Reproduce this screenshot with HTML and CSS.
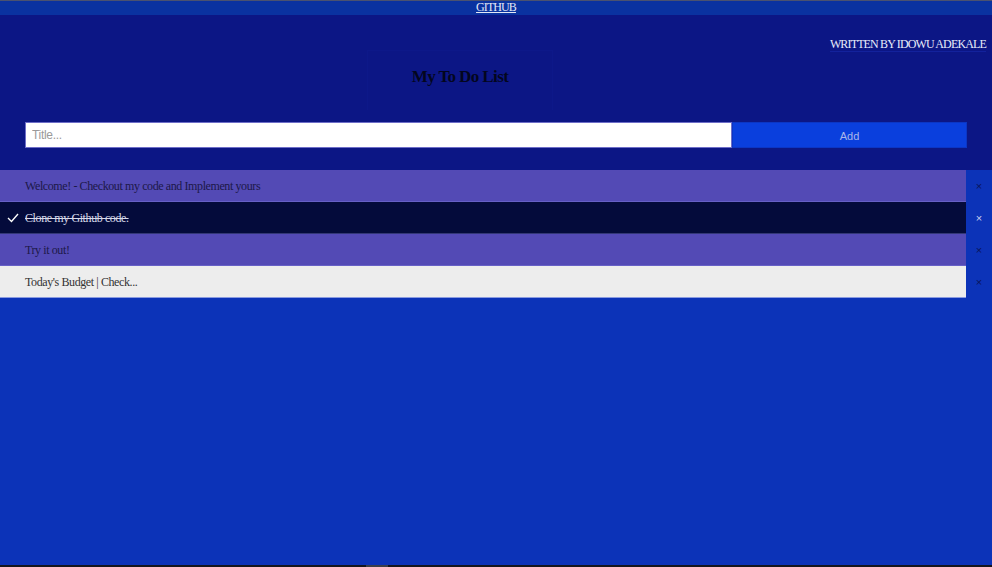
FILE: index.html
```html
<!DOCTYPE html>
<html>
<head>
<meta charset="utf-8">
<title>My To Do List</title>
<link rel="stylesheet" href="styles.css">
</head>
<body>
<div class="page">
  <div class="topbar"><a href="#" class="gh-link">GITHUB</a></div>
  <header class="header">
    <div class="author-row"><span class="author">WRITTEN BY IDOWU ADEKALE</span></div>
    <div class="title-box"><h2 class="title">My To Do List</h2></div>
    <div class="input-row">
      <input class="title-input" type="text" placeholder="Title...">
      <span class="add-btn">Add</span>
    </div>
  </header>
  <ul class="todo-list">
    <li class="item">
      <div class="item-body purple"><span class="txt">Welcome! - Checkout my code and Implement yours</span></div>
      <span class="close">×</span>
    </li>
    <li class="item">
      <div class="item-body checked"><svg class="check" width="12" height="10" viewBox="0 0 12 10"><polyline points="1,5 4.5,8.5 11,1" fill="none" stroke="#fff" stroke-width="1.4"/></svg><span class="txt">Clone my Github code.</span></div>
      <span class="close light">×</span>
    </li>
    <li class="item">
      <div class="item-body purple"><span class="txt">Try it out!</span></div>
      <span class="close">×</span>
    </li>
    <li class="item">
      <div class="item-body grey"><span class="txt">Today's Budget | Check...</span></div>
      <span class="close">×</span>
    </li>
  </ul>
  <div class="spacer"></div>
  <div class="footer"><span class="thumb"></span></div>
</div>
</body>
</html>
```
FILE: styles.css
```css
* { box-sizing: border-box; }
html, body { margin: 0; padding: 0; }
body {
  background: #0c33b8;
  font-family: "Liberation Serif", "Times New Roman", serif;
  font-size: 12px;
}
.page {
  height: 100vh;
  display: flex;
  flex-direction: column;
}
.topbar {
  height: 15px;
  background: #0a32a0;
  border-top: 1px solid #4a5270;
  text-align: center;
  line-height: 13px;
}
.gh-link {
  color: #e4e8f6;
  font-size: 12px;
  letter-spacing: -0.9px;
  text-decoration: underline;
}
.header {
  background: #0c1685;
  height: 155px;
  display: flex;
  flex-direction: column;
}
.author-row {
  text-align: right;
  padding: 22px 6px 0 0;
  height: 35px;
}
.author {
  display: inline-block;
  color: #e8ecfa;
  font-size: 12px;
  letter-spacing: -0.85px;
  line-height: 13px;
  border-bottom: 1px solid #13229c;
}
.title-box {
  width: 186px;
  height: 60px;
  margin-left: 367px;
  border: 1px solid #0d1889;
  border-bottom: none;
  display: flex;
  justify-content: center;
  padding-top: 16px;
}
.title {
  margin: 0;
  font-size: 17px;
  font-weight: bold;
  letter-spacing: -0.6px;
  color: #03061e;
  line-height: 20px;
}
.input-row {
  display: flex;
  margin: 12px 25px 0 25px;
  height: 26px;
}
.title-input {
  width: 707px;
  height: 26px;
  border: 1px solid #6e6ec8;
  padding: 0 6px;
  font-family: "Liberation Sans", Arial, sans-serif;
  font-size: 12px;
  letter-spacing: -0.3px;
  outline: none;
}
.title-input::placeholder { color: #9a9a9a; }
.add-btn {
  flex: 1;
  background: #0a3fdd;
  color: #a9b6ea;
  font-family: "Liberation Sans", Arial, sans-serif;
  font-size: 11px;
  text-align: center;
  line-height: 26px;
  border: 1px solid #0b36c4;
}
.todo-list {
  list-style: none;
  margin: 0;
  padding: 0;
}
.item {
  display: flex;
  height: 32px;
}
.item-body {
  flex: 1;
  position: relative;
  padding: 1px 0 0 25px;
  line-height: 31px;
  font-size: 12px;
  letter-spacing: -0.4px;
  border-bottom: 1px solid rgba(140, 140, 230, 0.35);
}
.item-body.purple { background: #534ab5; color: #1c1848; }
.item-body.checked { background: #040b3b; color: #d8daea; }
.item-body.checked .txt { text-decoration: line-through; }
.item-body.grey { background: #ededed; color: #333; border-bottom-color: #8a9be0; }
.check {
  position: absolute;
  left: 7px;
  top: 11px;
}
.close {
  width: 26px;
  text-align: center;
  line-height: 32px;
  font-family: "Liberation Sans", Arial, sans-serif;
  font-size: 11px;
  color: #0a145a;
}
.close.light { color: #c9d0f0; }
.spacer { flex: 1; }
.footer {
  height: 2px;
  background: #14161e;
  position: relative;
}
.thumb {
  position: absolute;
  left: 366px;
  top: 0;
  width: 22px;
  height: 2px;
  background: #3a3e4a;
}
```
